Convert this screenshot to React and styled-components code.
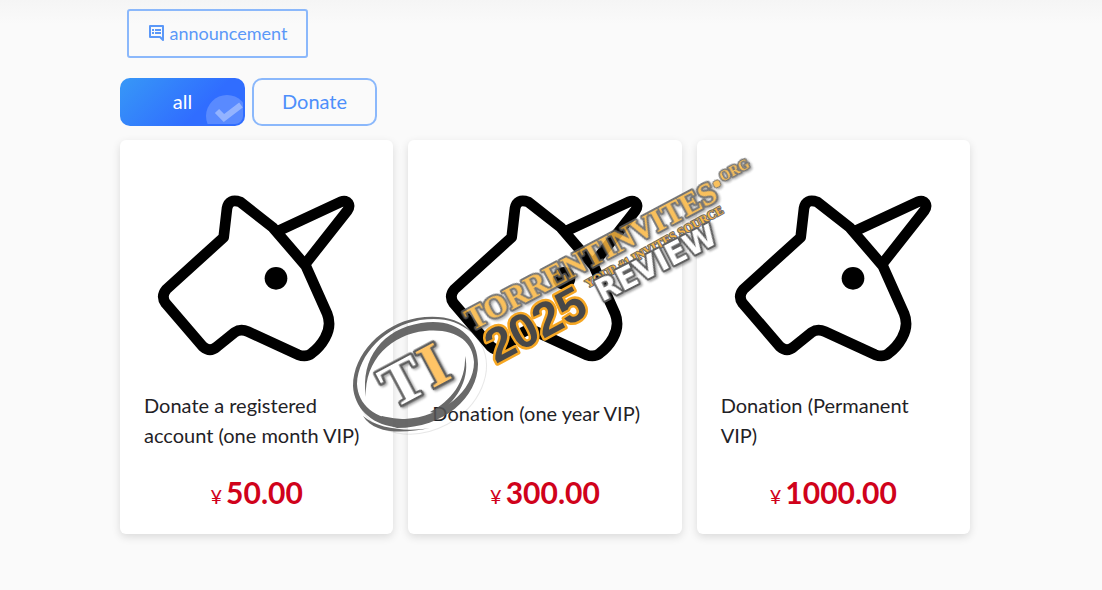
import React, { useState } from "react";
import styled, { createGlobalStyle } from "styled-components";

const GlobalStyle = createGlobalStyle`
  * {
    box-sizing: border-box;
  }

  body {
    margin: 0;
    background: #fafafa;
    color: #1f2226;
    font-family: Lato, "Liberation Sans", sans-serif;
    font-variant-ligatures: none;
  }

  button {
    font-family: inherit;
  }
`;

const Page = styled.div`
  position: relative;
  min-height: 100vh;
  padding: 9px 12px 56px 0;
  background: linear-gradient(#f5f5f5, #fafafa 24px);
`;

const Container = styled.main`
  max-width: 850px;
  margin: 0 auto;
`;

const Announcement = styled.button`
  display: flex;
  align-items: center;
  justify-content: center;
  gap: 5px;
  width: 181px;
  height: 49px;
  margin: 0 0 20px 7px;
  padding: 0 0 2px;
  border: 2px solid #8bb8fb;
  border-radius: 3px;
  background: transparent;
  color: #5b98f8;
  font-size: 18px;
  cursor: pointer;
`;

const NoteIcon = styled.svg`
  width: 17px;
  height: 18px;
`;

const Tabs = styled.div`
  display: flex;
  gap: 7px;
  margin-bottom: 14px;
`;

const Tab = styled.button`
  position: relative;
  width: 125px;
  height: 48px;
  padding: 0 0 2px;
  overflow: hidden;
  border: 2px solid #8bb8fb;
  border-radius: 10px;
  background: ${(props) =>
    props.$active
      ? "linear-gradient(135deg, #3798f7, #306dff 65%) border-box"
      : "transparent"};
  border-color: ${(props) => (props.$active ? "transparent" : "#8bb8fb")};
  color: ${(props) => (props.$active ? "#fff" : "#4d8ffb")};
  font-size: 20px;
  cursor: pointer;
`;

const CheckBadge = styled.svg`
  position: absolute;
  right: -2px;
  bottom: -2px;
  width: 40px;
  height: 32px;
`;

const Products = styled.section`
  display: grid;
  grid-template-columns: repeat(3, 1fr);
  gap: 15px;
`;

const Card = styled.article`
  display: flex;
  flex-direction: column;
  padding: 40px 24px 23px;
  border-radius: 6px;
  background: #fff;
  box-shadow: 0 3px 8px rgba(0, 0, 0, 0.13);
`;

const Unicorn = styled.svg`
  display: block;
  width: 240px;
  height: 200px;
  margin: 0 -8px 10px;
`;

const Title = styled.h2`
  display: flex;
  align-items: center;
  min-height: 46px;
  margin: 0 0 23px;
  font-size: 20px;
  font-weight: 400;
  line-height: 30px;
`;

const Price = styled.p`
  margin: auto 0 0;
  color: #d0021b;
  font-size: 30px;
  font-weight: 700;
  line-height: 38px;
  text-align: center;

  small {
    margin-right: 4px;
    font-size: 20px;
    font-weight: 400;
    line-height: 1;
  }
`;

const Watermark = styled.svg`
  position: absolute;
  top: 140px;
  left: calc(50% - 205px);
  width: 420px;
  height: 310px;
  pointer-events: none;

  text {
    font-family: "Liberation Serif", serif;
    font-weight: 700;
    paint-order: stroke;
    stroke-linejoin: round;
  }

  .digits {
    font-family: "Liberation Sans", sans-serif;
  }

  .wide {
    font-family: "DejaVu Sans", sans-serif;
  }

  .raised {
    filter: drop-shadow(1px 2px 1px rgba(0, 0, 0, 0.35));
  }
`;

const categories = ["all", "Donate"];

const products = [
  { title: "Donate a registered account (one month VIP)", price: "50.00" },
  { title: "Donation (one year VIP)", price: "300.00" },
  { title: "Donation (Permanent VIP)", price: "1000.00" },
];

const UnicornIcon = () => (
  <Unicorn viewBox="-11 0 720 600" aria-hidden="true">
    <g
      fill="none"
      stroke="#000"
      strokeWidth="32"
      strokeLinejoin="round"
      strokeLinecap="round"
    >
      <path d="M252 172 262 85Q268 54 302 66L400 143 498 257 562 400Q577 437 556 474Q541 501 516 520Q500 533 475 524L325 455Q303 445 285 457L232 500Q211 518 190 500L78 370Q63 349 80 328Z" />
      <path d="M418 152 605 65C623 57 635 75 623 92L500 248" />
    </g>
    <circle cx="409" cy="295" r="34" />
  </Unicorn>
);

const SiteMark = () => (
  <Watermark viewBox="346 140 420 310">
    <ellipse
      cx="421"
      cy="376"
      rx="68"
      ry="55"
      fill="none"
      stroke="#5f5f5f"
      opacity="0.15"
      transform="rotate(-28 421 376)"
    />
    <g fill="#555" opacity="0.88">
      {/* outer band */}
      <path d="M472 333C459 317 438 315 417 318C382 324 353 354 353 386C354 407 370 424 395 427L401 420C375 419 358 405 357 384C358 354 386 326 420 320C441 317 457 320 472 333Z" />
      {/* inner band */}
      <path
        fillRule="evenodd"
        d="M366 397C360 358 383 329 421 323C456 317 478 337 478 364C478 397 444 428 397 428L377 421L382 416C391 418 397 419 405 419C442 417 474 391 474 362C473 341 455 328 425 331C392 334 364 360 366 397Z"
      />
      <path d="M465 356C470 376 460 398 438 414L430 412C451 401 466 382 465 356Z" />
      <path d="M363 416C374 434 402 434 430 428C407 432 378 429 363 416Z" />
    </g>
    <g
      className="raised"
      transform="rotate(-28 394 410)"
      stroke="#5f5f5f"
      strokeWidth="5"
      fontSize="62"
    >
      <text x="394" y="409" fill="#fff">T</text>
      <text x="438" y="409" fill="#ffc466">I</text>
    </g>
    <g
      className="raised"
      transform="rotate(-28 474 330)"
      fill="#f9b640"
      stroke="#5f5f5f"
      opacity="0.85"
    >
      <text x="472" y="330" fontSize="31" strokeWidth="4">TORRENTINVITES</text>
      <circle cx="757" cy="315" r="4" strokeWidth="1" />
      <text x="763" y="316" fontSize="14" strokeWidth="3">ORG</text>
    </g>
    <text
      transform="translate(588 288) rotate(-29)"
      fontSize="12"
      fill="#f6b545"
      stroke="#6b6b6b"
      strokeWidth="2"
    >
      YOUR #1 INVITES SOURCE
    </text>
    <text
      className="wide raised"
      transform="translate(602 302) rotate(-27)"
      fontSize="30"
      fill="#fff"
      stroke="#5f5f5f"
      strokeWidth="4"
    >
      REVIEW
    </text>
    <text
      className="digits"
      transform="translate(496 364) rotate(-28)"
      fontSize="48"
      fill="#484848"
      stroke="#f6a723"
      strokeWidth="5"
    >
      2025
    </text>
  </Watermark>
);

const App = () => {
  const [active, setActive] = useState("all");

  return (
    <Page>
      <GlobalStyle />
      <Container>
        <Announcement type="button">
          <NoteIcon viewBox="0 0 17 18" aria-hidden="true">
            <path
              d="M15 16V2H2V13H12Z"
              fill="none"
              stroke="currentColor"
              strokeWidth="2"
              strokeLinejoin="round"
            />
            <path
              d="M4 6H6M7 6H13M4 9H6M7 9H13"
              stroke="currentColor"
              strokeWidth="2"
            />
          </NoteIcon>
          announcement
        </Announcement>
        <Tabs>
          {categories.map((name) => (
            <Tab
              key={name}
              type="button"
              $active={active === name}
              aria-pressed={active === name}
              onClick={() => setActive(name)}
            >
              {name}
              {active === name && (
                <CheckBadge viewBox="0 0 40 32" aria-hidden="true">
                  <circle cx="22" cy="22" r="21" fill="#fff" opacity="0.2" />
                  <path
                    d="M12 17 19 24 36 11"
                    fill="none"
                    stroke="#fff"
                    strokeWidth="6"
                    opacity="0.35"
                  />
                </CheckBadge>
              )}
            </Tab>
          ))}
        </Tabs>
        <Products>
          {products.map(({ title, price }) => (
            <Card key={title}>
              <UnicornIcon />
              <Title>{title}</Title>
              <Price>
                <small>¥</small>
                {price}
              </Price>
            </Card>
          ))}
        </Products>
      </Container>
      <SiteMark />
    </Page>
  );
};

export default App;
